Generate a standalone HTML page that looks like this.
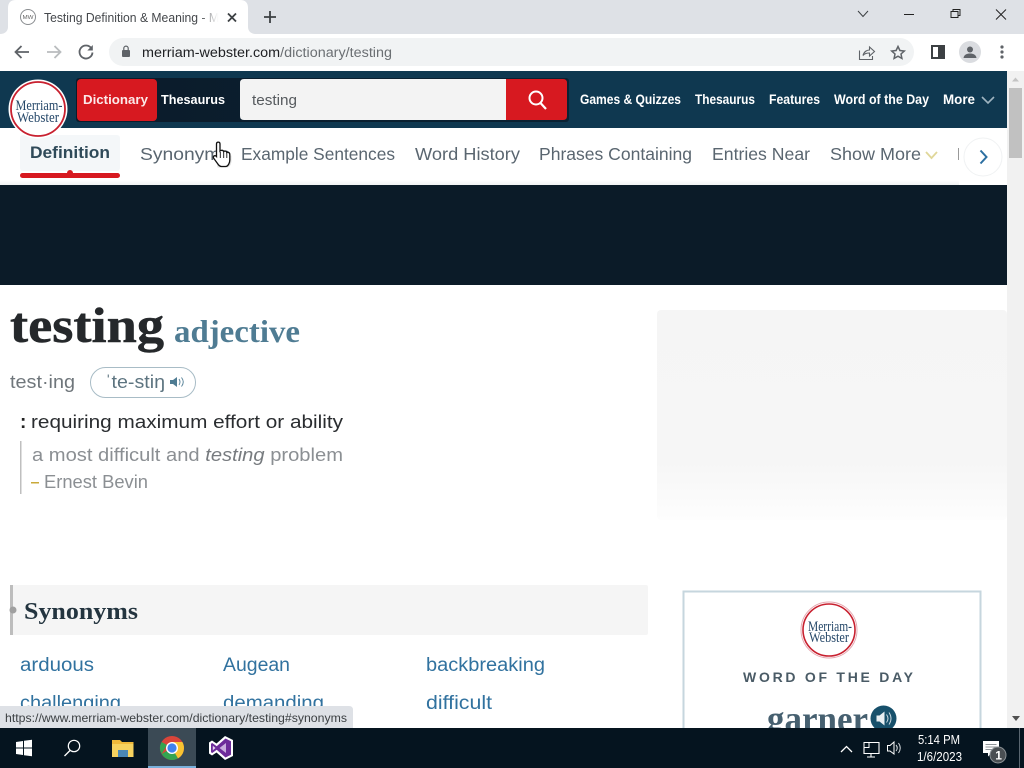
<!DOCTYPE html>
<html><head><meta charset="utf-8"><title>Testing Definition &amp; Meaning</title>
<style>
html,body{margin:0;padding:0;width:1024px;height:768px;overflow:hidden;background:#fff}
svg{display:block}
.s{font-family:"Liberation Sans",sans-serif}
.f{font-family:"Liberation Serif",serif}
</style></head><body>
<svg width="1024" height="768" viewBox="0 0 1024 768" xmlns="http://www.w3.org/2000/svg" class="s">
<defs>
<linearGradient id="fade" x1="0" x2="1"><stop offset="0" stop-color="#fff" stop-opacity="0"/><stop offset="1" stop-color="#fff"/></linearGradient>
<linearGradient id="sw" x1="0" x2="1" y1="0" y2="0"><stop offset="0" stop-color="#0b1b2a"/><stop offset="1" stop-color="#0a2233"/></linearGradient>
<linearGradient id="ad" x1="0" x2="0" y1="0" y2="1"><stop offset="0" stop-color="#f5f5f5"/><stop offset=".72" stop-color="#f6f6f6"/><stop offset="1" stop-color="#fdfdfd"/></linearGradient>
<linearGradient id="sh" x1="0" x2="0" y1="0" y2="1"><stop offset="0" stop-color="#fff"/><stop offset="1" stop-color="#f1f2f3"/></linearGradient>
</defs>
<rect width="1024" height="768" fill="#fff"/>
<!-- tab strip -->
<rect width="1024" height="34" fill="#dee1e6"/>
<path d="M0 34C5 34 8 31 8 27V8Q8 0 16 0H240Q248 0 248 8V27C248 31 251 34 256 34Z" fill="#fff"/>
<circle cx="28" cy="17" r="7.5" fill="#fff" stroke="#8a8d90" stroke-width="1"/>
<text x="22.5" y="19" font-size="5.5" fill="#666" textLength="11" lengthAdjust="spacingAndGlyphs">MW</text>
<text x="44" y="22" font-size="12.5" fill="#45484c" textLength="175" lengthAdjust="spacingAndGlyphs">Testing Definition &amp; Meaning - M</text>
<rect x="200" y="6" width="18" height="22" fill="url(#fade)"/>
<path d="M228 13.500L236 21.500M236 13.500L228 21.500" stroke="#3c4043" stroke-width="1.800"/>
<path d="M270 11V23M264 17H276" stroke="#3c4043" stroke-width="1.800"/>
<path d="M858 11L863 16.500L868 11" fill="none" stroke="#3c4043" stroke-width="1"/>
<path d="M904 14.500H914" stroke="#222" stroke-width="1"/>
<path d="M951 11.500H958V17.500H951ZM953 11.500V9.500H960V15.500H958" fill="none" stroke="#222" stroke-width="1"/>
<path d="M996 9.500L1006 19.500M1006 9.500L996 19.500" stroke="#222" stroke-width="1"/>
<!-- toolbar -->
<rect y="34" width="1024" height="37" fill="#fff"/>
<path d="M29 52H16M21.500 46L15.500 52L21.500 58" fill="none" stroke="#5f6368" stroke-width="1.800"/>
<path d="M47 52H60M54.500 46L60.500 52L54.500 58" fill="none" stroke="#b9bcbf" stroke-width="1.800"/>
<path d="M91.500 48.500A6.500 6.500 0 1 0 92.500 52.500" fill="none" stroke="#5f6368" stroke-width="1.800"/>
<path d="M92.800 45V50.500H87.300Z" fill="#5f6368"/>
<rect x="109" y="38" width="805" height="28" rx="14" fill="#f1f3f4"/>
<rect x="122" y="50" width="8" height="7" rx="1" fill="#5f6368"/>
<path d="M123.800 50V48.300A2.200 2.200 0 0 1 128.200 48.300V50" fill="none" stroke="#5f6368" stroke-width="1.200"/>
<text x="142" y="57" font-size="13.500" fill="#202124" textLength="250" lengthAdjust="spacingAndGlyphs">merriam-webster.com<tspan fill="#6b6f73">/dictionary/testing</tspan></text>
<path d="M859.500 50.500V59.500H872.500V56M863 55.500C864 51.500 867 50 869.500 50V47L874.500 51.500L869.500 56V53C867 53 864.500 53.500 863 55.500Z" fill="none" stroke="#5f6368" stroke-width="1.100"/>
<path d="M898 46.500L899.900 50.500L904.300 51L901 54L901.900 58.400L898 56.200L894.100 58.400L895 54L891.700 51L896.100 50.500Z" fill="none" stroke="#5f6368" stroke-width="1.500"/>
<rect x="932" y="46" width="12" height="12" fill="none" stroke="#3c4043" stroke-width="2"/><rect x="938" y="46" width="6" height="12" fill="#3c4043"/>
<circle cx="970" cy="52" r="11" fill="#dadce0"/>
<circle cx="970" cy="49.500" r="3" fill="#5f6368"/><path d="M963.500 58C964 54.500 967 53.500 970 53.500S976 54.500 976.500 58Z" fill="#5f6368"/>
<circle cx="1002" cy="47" r="1.600" fill="#5f6368"/><circle cx="1002" cy="52" r="1.600" fill="#5f6368"/><circle cx="1002" cy="57" r="1.600" fill="#5f6368"/>
<!-- scrollbar -->
<rect x="1007" y="71" width="17" height="657" fill="#f1f1f1"/>
<rect x="1009" y="88" width="13" height="70" fill="#c1c1c1"/>
<path d="M1015.500 77.500L1019 81.500H1012Z" fill="#c4c4c4"/>
<path d="M1012 716H1020L1016 721Z" fill="#505050"/>
<!-- header -->
<rect y="71" width="1007" height="57" fill="#0f3850"/>
<rect x="76" y="78" width="493" height="44" rx="3" fill="url(#sw)"/>
<rect x="77" y="79" width="80" height="42" rx="4" fill="#d71920"/>
<text x="83" y="104" font-size="12.500" font-weight="bold" fill="#fbe9e9" textLength="65" lengthAdjust="spacingAndGlyphs">Dictionary</text>
<text x="161" y="104" font-size="12.500" font-weight="bold" fill="#fff" textLength="64" lengthAdjust="spacingAndGlyphs">Thesaurus</text>
<path d="M244 79H506V120H244Q240 120 240 116V83Q240 79 244 79Z" fill="#f3f3f3"/>
<text x="252" y="105" font-size="14.500" fill="#565a5e" textLength="45" lengthAdjust="spacingAndGlyphs">testing</text>
<path d="M506 79H563Q567 79 567 83V116Q567 120 563 120H506Z" fill="#d71920"/>
<circle cx="536" cy="98" r="6.500" fill="none" stroke="#fff" stroke-width="2"/>
<path d="M540.500 103L546 109" stroke="#fff" stroke-width="2.200"/>
<g font-size="13.500" font-weight="bold" fill="#fff">
<text x="580" y="104" textLength="101" lengthAdjust="spacingAndGlyphs">Games &amp; Quizzes</text>
<text x="695" y="104" textLength="60" lengthAdjust="spacingAndGlyphs">Thesaurus</text>
<text x="769" y="104" textLength="51" lengthAdjust="spacingAndGlyphs">Features</text>
<text x="834" y="104" textLength="95" lengthAdjust="spacingAndGlyphs">Word of the Day</text>
<text x="943" y="104" textLength="32" lengthAdjust="spacingAndGlyphs">More</text>
</g>
<path d="M982 97L988 103L994 97" fill="none" stroke="#9fb4c0" stroke-width="1.600"/>
<!-- sub nav -->
<rect y="128" width="1007" height="57" fill="#fff"/>
<rect y="180" width="959" height="5" fill="url(#sh)"/>
<rect x="20" y="135" width="100" height="36" rx="3" fill="#f4f7f9"/>
<text x="30" y="158" font-size="16.500" font-weight="bold" fill="#2f4a59" textLength="80" lengthAdjust="spacingAndGlyphs">Definition</text>
<rect x="20" y="173" width="100" height="5" rx="2.500" fill="#d71920"/><circle cx="70" cy="173" r="3" fill="#d71920"/>
<g font-size="17.500" fill="#5a6670">
<text x="140" y="160" textLength="90" lengthAdjust="spacingAndGlyphs">Synonyms</text>
<text x="241" y="160" textLength="154" lengthAdjust="spacingAndGlyphs">Example Sentences</text>
<text x="415" y="160" textLength="105" lengthAdjust="spacingAndGlyphs">Word History</text>
<text x="539" y="160" textLength="153" lengthAdjust="spacingAndGlyphs">Phrases Containing</text>
<text x="712" y="160" textLength="98" lengthAdjust="spacingAndGlyphs">Entries Near</text>
<text x="830" y="160" textLength="91" lengthAdjust="spacingAndGlyphs">Show More</text>
</g>
<path d="M926 152L931.500 158L937 152" fill="none" stroke="#e0d79a" stroke-width="1.800"/>
<rect x="958" y="148" width="1.500" height="12" fill="#999"/>
<rect x="959" y="128" width="48" height="55" fill="#fff"/>
<circle cx="983" cy="157" r="19" fill="#fff" stroke="#f0f2f3"/>
<path d="M980.500 150.500L986.500 157L980.500 163.500" fill="none" stroke="#2c6fa1" stroke-width="2"/>
<!-- logo overlaps nav -->
<circle cx="38" cy="109" r="29.500" fill="#fff"/>
<circle cx="38" cy="109" r="27" fill="#fff" stroke="#c8202f" stroke-width="1.800"/>
<g class="f" font-size="15" fill="#27496a" text-anchor="middle">
<text x="39" y="110" textLength="47" lengthAdjust="spacingAndGlyphs">Merriam-</text>
<text x="38" y="122" textLength="42" lengthAdjust="spacingAndGlyphs">Webster</text>
</g>
<!-- cursor -->
<path d="M217.500 167.500H227C229.500 167.500 231.500 164 231.500 160.500V155.500L216 157Z" fill="#000" opacity=".12"/>
<path d="M216.500 144C216.500 141.500 220 141.500 220 144V151C221 150 223.200 150 223.700 151.500C224.700 150.700 226.500 151 226.800 152.500C227.700 152 229.800 152.300 229.800 154.500V160C229.800 163 228 166.500 225.500 166.500H221.500C219.500 166.500 218.500 165 217.500 163.500L213.500 158C212.800 156 215 154.800 216.500 156.500Z" fill="#fff" stroke="#111" stroke-width="1.300"/>
<path d="M220.300 152V158M223.700 152V158M226.800 153V158" stroke="#111" stroke-width=".9"/>
<!-- banner -->
<rect y="185" width="1007" height="100" fill="#0b1b28"/>
<!-- headword -->
<text class="f" x="10" y="342" font-size="50" font-weight="bold" fill="#25282b" stroke="#25282b" stroke-width=".5" textLength="154" lengthAdjust="spacingAndGlyphs">testing</text>
<text class="f" x="174" y="342" font-size="32" font-weight="bold" fill="#4f7c93" textLength="126" lengthAdjust="spacingAndGlyphs">adjective</text>
<text x="10" y="388" font-size="18" fill="#6f767b" textLength="65" lengthAdjust="spacingAndGlyphs">test·ing</text>
<rect x="90.500" y="367.500" width="105" height="30" rx="15" fill="#fff" stroke="#a8bcc6"/>
<text x="105" y="388" font-size="18" fill="#5d7480" textLength="60" lengthAdjust="spacingAndGlyphs">ˈte-stiŋ</text>
<path d="M170 380H173L177 377V387L173 384H170Z" fill="#4f7c93"/>
<path d="M179 379Q181 382 179 385M181.500 377.500Q185 382 181.500 386.500" fill="none" stroke="#4f7c93" stroke-width=".9"/>
<text x="20" y="428" font-size="19" font-weight="bold" fill="#222">:</text>
<text x="31" y="428" font-size="18.500" fill="#2a2d30" textLength="312" lengthAdjust="spacingAndGlyphs">requiring maximum effort or ability</text>
<rect x="20" y="441" width="1.500" height="53" fill="#bfbfbf"/>
<text x="32" y="461" font-size="18.500" fill="#8b8f93" textLength="311" lengthAdjust="spacingAndGlyphs">a most difficult and <tspan font-style="italic" fill="#777b7f">testing</tspan> problem</text>
<rect x="31" y="482" width="8" height="1.500" fill="#c9a93a"/>
<text x="44" y="488" font-size="18" fill="#8b8f93" textLength="104" lengthAdjust="spacingAndGlyphs">Ernest Bevin</text>
<!-- ad placeholder -->
<rect x="657" y="310" width="350" height="210" rx="4" fill="url(#ad)"/>
<!-- synonyms -->
<rect x="10" y="585" width="638" height="50" rx="2" fill="#f5f5f5"/>
<rect x="10" y="585" width="3" height="50" fill="#bdbdbd"/>
<circle cx="13" cy="610" r="3.500" fill="#a0a0a0"/>
<text class="f" x="24" y="619" font-size="24" font-weight="bold" fill="#23343f" textLength="114" lengthAdjust="spacingAndGlyphs">Synonyms</text>
<g font-size="19" fill="#31729f">
<text x="20" y="671" textLength="74" lengthAdjust="spacingAndGlyphs">arduous</text>
<text x="223" y="671" textLength="67" lengthAdjust="spacingAndGlyphs">Augean</text>
<text x="426" y="671" textLength="119" lengthAdjust="spacingAndGlyphs">backbreaking</text>
<text x="20" y="709" textLength="101" lengthAdjust="spacingAndGlyphs">challenging</text>
<text x="223" y="709" textLength="101" lengthAdjust="spacingAndGlyphs">demanding</text>
<text x="426" y="709" textLength="66" lengthAdjust="spacingAndGlyphs">difficult</text>
</g>
<!-- wotd -->
<rect x="683.500" y="591.500" width="297" height="150" fill="#fff" stroke="#c6d6de" stroke-width="2"/>
<circle cx="829" cy="630" r="28" fill="#fff" stroke="#e6a9b2" stroke-width="1"/>
<circle cx="829" cy="630" r="26" fill="#fff" stroke="#c8202f" stroke-width="1.600"/>
<g class="f" font-size="15" fill="#27496a" text-anchor="middle">
<text x="830" y="631" textLength="44" lengthAdjust="spacingAndGlyphs">Merriam-</text>
<text x="829" y="642" textLength="40" lengthAdjust="spacingAndGlyphs">Webster</text>
</g>
<text x="743" y="682" font-size="14" font-weight="bold" fill="#4a5b66" textLength="170">WORD OF THE DAY</text>
<text class="f" x="767" y="731" font-size="36" font-weight="bold" fill="#466070" textLength="101" lengthAdjust="spacingAndGlyphs">garner</text>
<circle cx="883.500" cy="718.500" r="13" fill="#17506b"/>
<path d="M876.500 715.500H879.500L884.500 711.500V725.500L879.500 721.500H876.500Z" fill="#e7eef2"/>
<path d="M886.500 714.500Q889.500 718.500 886.500 722.500M889 712.500Q893 718.500 889 724.500" fill="none" stroke="#c9d8e0" stroke-width="1"/>
<!-- status bubble -->
<path d="M0 706H349Q353 706 353 710V728H0Z" fill="#dee1e6"/>
<text x="5" y="722" font-size="12" fill="#3c4043" textLength="342" lengthAdjust="spacingAndGlyphs">https://www.merriam-webster.com/dictionary/testing#synonyms</text>
<!-- taskbar -->
<rect y="728" width="1024" height="40" fill="#05141f"/>
<path d="M16 742L23 741V747.500H16ZM24 740.800L32 739.800V747.500H24ZM16 748.500H23V755L16 754ZM24 748.500H32V756.200L24 755.200Z" fill="#fff"/>
<circle cx="74" cy="746" r="5.700" fill="none" stroke="#fff" stroke-width="1.200"/>
<path d="M70 750.500L64.500 756" stroke="#fff" stroke-width="1.300"/>
<path d="M112 740H120L122 742H133.500V757H112Z" fill="#f0b93a"/>
<rect x="112" y="744" width="21.500" height="13" fill="#f7d25f"/>
<rect x="118" y="750" width="10" height="7" fill="#4b87b5"/>
<rect x="148" y="728" width="48" height="40" fill="#3b4a55"/>
<rect x="148" y="766" width="48" height="2" fill="#79b0db"/>
<circle cx="172" cy="748" r="12" fill="#d9453a"/>
<path d="M172 748L161.600 754A12 12 0 0 0 178 758.400Z" fill="#34a450"/>
<path d="M172 748L178 758.400A12 12 0 0 0 182.400 742L172 742Z" fill="#f9c331"/>
<path d="M161.600 742A12 12 0 0 0 161.600 754L167 745Z" fill="#34a450"/>
<circle cx="172" cy="748" r="6" fill="#fff"/><circle cx="172" cy="748" r="4.600" fill="#3f82ee"/>
<path d="M225 736L233 740V756L225 760L216.500 752.500L212 755.500L209 753.500V742.500L212 740.500L216.500 743.500Z" fill="#fff"/>
<path d="M225.500 738.500L231 741.200V754.800L225.500 757.500L216.700 749.800L212.300 753L211 752.200V743.800L212.300 743L216.700 746.200Z" fill="#6d2c9a"/>
<path d="M226 743V753L219.500 748Z" fill="#c9aede"/>
<path d="M212.800 745.800L215.500 748L212.800 750.200Z" fill="#e4d8ee"/>
<path d="M841 752L846.500 746.500L852 752" fill="none" stroke="#fff" stroke-width="1.300"/>
<path d="M864 742.500H879V753.500H864V748M871 753.500V757M867 757H875" fill="none" stroke="#fff" stroke-width="1.100"/>
<rect x="864" y="742.500" width="5" height="5" fill="#05141f" stroke="#fff"/>
<path d="M887.500 745.500H890L894 742V754L890 751H887.500Z" fill="none" stroke="#fff"/>
<path d="M896 745Q898.500 748 896 751M898.500 743Q902 748 898.500 753" fill="none" stroke="#d8dde0"/>
<text x="918" y="744" font-size="13" fill="#fff" textLength="42" lengthAdjust="spacingAndGlyphs">5:14 PM</text>
<text x="917" y="761" font-size="13" fill="#fff" textLength="45" lengthAdjust="spacingAndGlyphs">1/6/2023</text>
<path d="M983 741H999V753H991.500L988 756.500V753H983Z" fill="#fff"/>
<path d="M985.500 744.500H996.500M985.500 747H996.500M985.500 749.500H996.500" stroke="#6b7378" stroke-width=".8"/>
<circle cx="998" cy="755" r="8" fill="#4a4f53" stroke="#8a9094"/>
<text x="995.300" y="759.500" font-size="12" font-weight="bold" fill="#fff">1</text>
<rect x="1019" y="728" width="1" height="40" fill="#5a6670"/>
</svg>
</body></html>
